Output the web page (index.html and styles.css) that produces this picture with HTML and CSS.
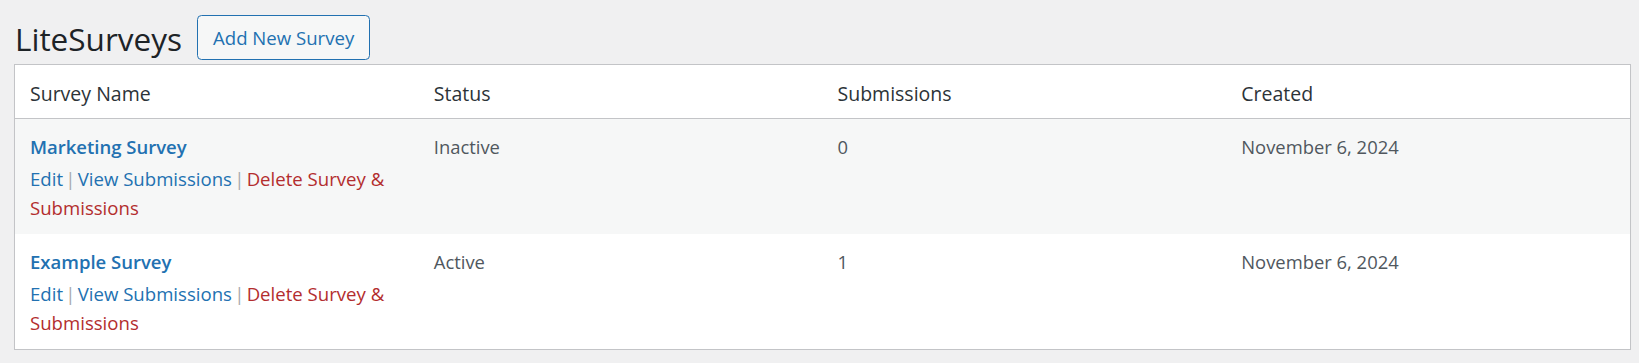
FILE: index.html
```html
<!DOCTYPE html>
<html lang="en">
<head>
<meta charset="utf-8">
<title>LiteSurveys</title>
<link rel="stylesheet" href="styles.css">
</head>
<body>
<div class="wrap">
  <div class="page-head">
    <h1 class="page-title">LiteSurveys</h1>
    <a class="page-title-action" href="#">Add New Survey</a>
  </div>
  <table class="list-table">
    <thead>
      <tr>
        <th>Survey Name</th>
        <th>Status</th>
        <th>Submissions</th>
        <th>Created</th>
      </tr>
    </thead>
    <tbody>
      <tr class="alt">
        <td>
          <a class="row-title" href="#">Marketing Survey</a>
          <div class="row-actions"><a href="#">Edit</a><span class="sep"> | </span><a href="#">View Submissions</a><span class="sep"> | </span><a class="delete" href="#">Delete Survey &amp; Submissions</a></div>
        </td>
        <td>Inactive</td>
        <td>0</td>
        <td>November 6, 2024</td>
      </tr>
      <tr>
        <td>
          <a class="row-title" href="#">Example Survey</a>
          <div class="row-actions"><a href="#">Edit</a><span class="sep"> | </span><a href="#">View Submissions</a><span class="sep"> | </span><a class="delete" href="#">Delete Survey &amp; Submissions</a></div>
        </td>
        <td>Active</td>
        <td>1</td>
        <td>November 6, 2024</td>
      </tr>
    </tbody>
  </table>
</div>
</body>
</html>
```
FILE: styles.css
```css
html, body {
  margin: 0;
  padding: 0;
  background: #f0f0f1;
}
body {
  font-family: "Open Sans", "Noto Sans", sans-serif;
  color: #3c434a;
}
.wrap {
  padding: 15px 8px 0 14px;
}
.page-head {
  display: flex;
  align-items: flex-start;
  gap: 15px;
  height: 45px;
  margin-bottom: 4px;
}
.page-title {
  margin: 3.5px 0 0 1px;
  font-size: 31.5px;
  font-weight: 400;
  line-height: 40px;
  color: #1d2327;
}
.page-title-action {
  display: block;
  box-sizing: border-box;
  height: 45px;
  padding: 0 15px;
  border: 1px solid #2271b1;
  border-radius: 4.5px;
  background: #f6f7f7;
  color: #2271b1;
  font-size: 18.6px;
  line-height: 43px;
  text-decoration: none;
  white-space: nowrap;
}
.list-table {
  width: 100%;
  table-layout: fixed;
  border-collapse: separate;
  border-spacing: 0;
  border: 1px solid #c3c4c7;
  background: #fff;
  box-shadow: 0 1px 1px rgba(0, 0, 0, 0.04);
}
.list-table th {
  text-align: left;
  font-weight: 400;
  font-size: 19.5px;
  line-height: 27px;
  color: #2c3338;
  padding: 14.5px 15px 11.5px;
  border-bottom: 1px solid #c3c4c7;
}
.list-table td {
  vertical-align: top;
  font-size: 18.4px;
  line-height: 28px;
  color: #50575e;
  padding: 14px 15px 12px;
}
.list-table tr.alt td {
  background: #f6f7f7;
}
.row-title {
  display: block;
  font-size: 18.5px;
  font-weight: 600;
  line-height: 28px;
  color: #2271b1;
  text-decoration: none;
}
.row-actions {
  padding-top: 4.4px;
  font-size: 18.6px;
  line-height: 28.3px;
  color: #a7aaad;
}
.row-actions .sep {
  word-spacing: -2.6px;
}
.row-actions a {
  color: #2271b1;
  text-decoration: none;
}
.row-actions a.delete {
  color: #b32d2e;
}
```
